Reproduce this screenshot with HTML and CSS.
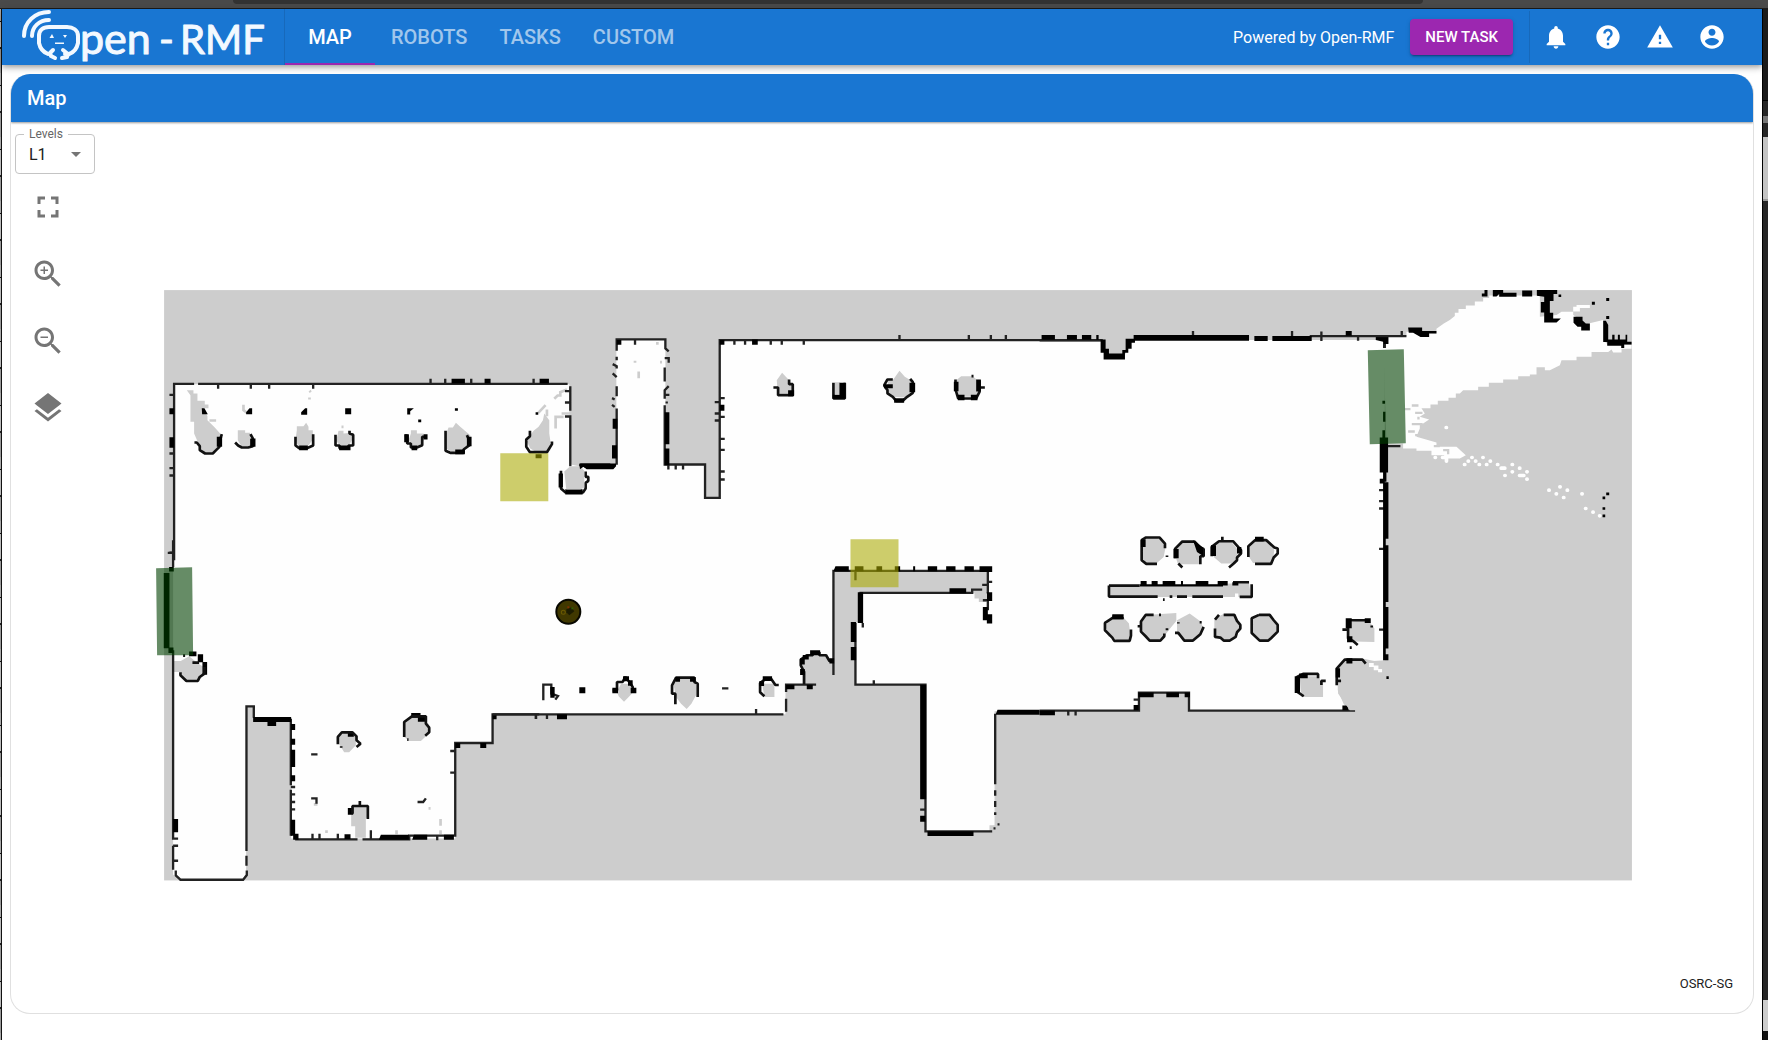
FILE: index.html
```html
<!DOCTYPE html>
<html lang="en">
<head>
<meta charset="utf-8">
<title>Open-RMF Dashboard</title>
<link rel="stylesheet" href="styles.css">
</head>
<body>
<div class="browser-edge"><div class="address-field"></div></div>
<div class="desktop">
<div class="backdrop-left"></div>
<div class="app">
  <header class="app-bar">
    <a class="brand" href="#" aria-label="Open-RMF">
      <svg class="logo" viewBox="0 0 284 56" role="img" aria-label="Open-RMF">
        <g fill="none" stroke="#f3f9ff" stroke-width="4" stroke-linecap="round" stroke-linejoin="round">
          <path d="M22 27C22 13 33 3 47 3M30 27C30 18 37 11 47 11"/>
          <path d="M46 45C41 43 38 39 37 34V27C37 21 41 18 47 18H65C71 18 76 21 76 27V34C75 39 73 43 67 45H63"/>
          <path d="M51 41L48 44L49 47L53 49M61 41L66 45L65 48L60 49"/>
        </g>
        <path d="M47.500 29L50 25L52 29ZM61 26H65L63 29ZM53 33.500H62V35H53Z" fill="#f3f9ff"/>
        <g class="wordmark"><text class="lower" x="78" y="45">pen</text><text x="157" y="45">-</text><text x="178" y="45">RMF</text></g>
      </svg>
    </a>
    <nav class="tabs">
      <a class="tab active" href="#map">MAP</a><a class="tab" href="#robots">ROBOTS</a><a class="tab" href="#tasks">TASKS</a><a class="tab" href="#custom">CUSTOM</a>
    </nav>
    <div class="actions">
      <span class="powered">Powered by Open-RMF</span>
      <button class="new-task" type="button">NEW TASK</button>
      <span class="divider"></span>
      <button class="icon-button" type="button" aria-label="Notifications"><svg viewBox="0 0 24 24"><path d="M12 22c1.100 0 2-.900 2-2h-4c0 1.100.890 2 2 2zm6-6v-5c0-3.070-1.640-5.640-4.500-6.320V4c0-.830-.670-1.500-1.500-1.500s-1.500.670-1.500 1.500v.680C7.630 5.360 6 7.920 6 11v5l-2 2v1h16v-1l-2-2z"/></svg></button>
      <button class="icon-button" type="button" aria-label="Help"><svg viewBox="0 0 24 24"><path d="M12 2C6.480 2 2 6.480 2 12s4.480 10 10 10 10-4.480 10-10S17.520 2 12 2zm1 17h-2v-2h2v2zm2.070-7.750l-.900.920C13.450 12.900 13 13.500 13 15h-2v-.500c0-1.100.450-2.100 1.170-2.830l1.240-1.260c.370-.360.590-.860.590-1.410 0-1.100-.900-2-2-2s-2 .900-2 2H8c0-2.210 1.790-4 4-4s4 1.790 4 4c0 .880-.360 1.680-.930 2.250z"/></svg></button>
      <button class="icon-button" type="button" aria-label="Warnings"><svg viewBox="0 0 24 24"><path d="M1 21h22L12 2 1 21zm12-3h-2v-2h2v2zm0-4h-2v-4h2v4z"/></svg></button>
      <button class="icon-button" type="button" aria-label="Account"><svg viewBox="0 0 24 24"><path d="M12 2C6.480 2 2 6.480 2 12s4.480 10 10 10 10-4.480 10-10S17.520 2 12 2zm0 3c1.660 0 3 1.340 3 3s-1.340 3-3 3-3-1.340-3-3 1.340-3 3-3zm0 14.200c-2.500 0-4.710-1.280-6-3.220.030-1.990 4-3.080 6-3.080 1.990 0 5.970 1.090 6 3.080-1.290 1.940-3.500 3.220-6 3.220z"/></svg></button>
    </div>
  </header>
  <main class="panel">
    <h1 class="panel-title">Map</h1>
    <div class="map-area">
      <svg class="floorplan" viewBox="12 122 1741 890" role="img" aria-label="Floor plan of level L1">
        <rect x="165" y="290" width="1467" height="590" fill="#cdcdcd"/>
        <path fill="#fefefe" d="M174 384H570V464L580 466H617V340H666V464H706V498H720V340H1102L1106 357H1124L1133 340H1385V660L1370 661L1356 658H1346L1338 668V690L1344 704L1352 711H1189V692H1139V711H995V831H926V684H856V622H860V593H988V571H834V674L826 657L815 652L803 660V684H786V714H493V743H456V838H292V719H254V706H247V876L242 880H180L174 874Z"/>
        <!-- north-east scan -->
        <g transform="translate(1340 280) scale(.3333)">
          <path fill="#fefefe" d="M130 170H200V155L290 160V146L312 130L330 120L345 108V98H356V87H378V76H405V64H430V54H448V46H600V110L650 105L665 95H700V80H710V75H750V84H720V94H700V105L740 132L790 120V180L805 195H875V206H845V217H820L815 208L805 216H755V230H710V240H665L660 255L630 270H615V261H590V283H570V288H535V298H490V308H447V320H415V330H370L360 340H348V353H326V362H294V373H272V384H245L255 400L240 410L268 418L250 430H240V445L230 470L290 487V500H350L378 525L360 535H320L312 525H275V512H230V505H190V490H140Z"/>
          <path fill="none" stroke="#cdcdcd" stroke-width="7" d="M195 387H212M216 376H236M226 398H248M236 410V418M216 432H248M205 454H225M226 465H246M282 498H300M310 510H325V522"/>
          <path fill="none" stroke="#fefefe" stroke-width="11" stroke-linecap="round" d="M319 442H320M286 532H287M308 532H320V543M374 553H375M385 543H386M396 532H397M407 543H408M418 553H419M440 553H441M451 543H452M429 532H430M473 553H474M484 564H495M495 586H496M517 575H518M517 553H518M539 564H540M561 575H562M561 597H562M539 586H552M627 630H628M649 641H650M671 652H672M682 630H683M660 620H661M726 641H727M737 685H738M759 696H760M779 707H780"/>
          <path d="M205 142H247V153H290V160H268V171H242L220 158H207ZM108 170H146V192H138V204H130V185L108 180ZM426 49V40H434V30H443V49ZM459 30H490V38H530V50H478V42L470 49H459ZM547 31H577V49H547ZM591 30H652V42H641V63H630V98H640V115H663L650 127H613V97H603V66H613V50L591 47ZM701 110H728V121L738 130H750V151H724V140H713L701 128ZM790 122H798L805 135V178H817V164H824V178H834V164H840V178H857V164H862V185H875V193H853V204H844V197H802V186H790ZM656 43h8v8h-8ZM756 65h9v9h-9ZM799 54h9v9h-9ZM799 108h9v9h-9ZM799 637h9v8h-9ZM788 649h8v8h-8ZM788 681h8v8h-8ZM788 703h8v8h-8Z"/>
        </g>
        <!-- meeting room row, north-west -->
        <g transform="translate(151 280) scale(.3333)">
          <path class="grey" d="M110 330H130V340H142V362H164V373H175V384H160L172 408V420L194 442L210 460V490L190 518H160L145 490L132 460V425H121V345ZM263 450H285V458H300V498H274L263 480ZM440 450V438H460L468 428L475 440V450H488V478L472 500H445L436 480ZM565 452H580V460L605 458V480L595 498H570L558 482ZM782 460V450H800V460H820V480L810 498H785L775 480ZM888 460L895 442H908L917 428L930 440L960 465V485L945 508L905 516L888 505ZM1140 465L1150 452L1165 440L1178 420L1182 400L1197 420V460L1200 480V510L1165 520L1140 505L1130 485Z"/>
          <path class="faint" d="M178 421H198M280 374V390L290 398M478 332L482 336M478 352V358M574 440H580M1164 398L1186 375M1212 356L1222 346H1230V336L1250 328M1234 400H1262M1216 445V410H1240M1190 388V408"/>
          <path class="wall" d="M132 311H72V840M144 311H1252M1260 318V392M1244 409H1260V558M58 344H72M58 520H72M58 564H72M58 586H72M58 817H72M204 311V326M302 311V326M357 311V326M489 311V326M841 311V296M885 311V296M963 311V296M1150 311V296M1244 333H1260M1244 367H1260M1290 568V552"/>
          <path d="M58 384h14v18h-14zM58 471h14v32h-14zM904 296h40v14h-40zM1003 296h18v14h-18zM1168 296h28v14h-28zM585 384h18v18h-18zM155 384h8l10 18h-17zM288 396l10-12h8v18h-18zM453 396l12-12h6v20h-18zM771 384h20l-11 9v10h-9zM804 418h9v8h-9zM914 384h9v8h-9zM1156 396h8v8h-8zM1290 550h90v16h-70l-12-6-8 8z"/>
          <path class="ring" d="M133 487H140L149 498V510L165 520H188L198 510L208 500V487L215 462M255 487L264 496L275 502H294L308 498V475L301 462M436 470V496L447 504H470L489 496V462M598 452V460L609 464V496H595V504H568V496H556V464M764 466H771V490H782V502H800L816 495V470H830M886 452V512L900 518H940V508L958 495V482L950 465M1139 452V468L1128 478V500L1139 516H1190L1205 492V484M1232 572V590V625L1246 637H1298L1306 625V608L1314 602V590H1306V574"/>
          <path d="M200 470h16v30h-16zM300 475h16v25h-16zM447 496h26v14h-26zM567 496h34v14h-34zM784 496h17v14h-17zM762 462h14v24h-14zM820 462h12v16h-12zM915 508h29v14h-29zM950 470h14v28h-14zM1156 522h18v12h-18zM1225 580h13v42h-13zM1245 627h52v16h-52z"/>
          <path class="grey" d="M1242 574L1260 558H1290L1302 572V622L1290 628H1248Z"/>
        </g>
        <!-- north corridor and main hall wall -->
        <g transform="translate(560 280) scale(.3333)">
          <path class="faint" d="M227 242V248M238 274V294M290 190H298M302 246H308"/>
          <path class="wall" d="M172 212V178H318V205L328 214M172 230V240M160 252L172 258V265M160 280L172 291M172 318V348M158 354L166 358M158 374L166 380M172 385V554M316 234H328V248M316 262V304M328 318L316 330V356M318 344H330M322 364V370M316 375V553H437V653H481V180H1626M227 180V194M525 180V194M557 180V194M634 180V194M667 180V194M733 180V194M1020 180V165M1228 180V165M1294 180V165M1339 180V165M481 354H496M466 366H481M466 400H481M481 410H496M466 421H481M481 476H496M481 509H496M481 574H496M481 598H496M327 553V568M349 553V568M371 553V568"/>
          <path d="M172 180h14v14h-14zM160 416h14v30h-14zM158 495h15v40h-15zM316 396h14v96h-14zM316 505h14v50h-14zM60 550h110v8l-8 9h-80l-10-8-10 8zM481 180h14v14h-14zM578 178h17v16h-17zM481 374h14v18h-14z"/>
          <path class="grey" d="M652 300L668 278L685 296L700 318V340H655ZM826 306H842V342H826ZM985 300H1000L1020 272L1036 290L1056 302V335L1035 352L1000 350L985 340ZM1190 300L1205 288H1240L1258 304V340L1245 350H1195Z"/>
          <path class="ring" d="M642 322H656V345H700V312H689V298M822 308V355H856V308M1000 298H984L974 316L984 330V340L1000 350L1010 362H1030L1043 350L1060 338V306L1052 296M1188 298V328L1196 355H1250L1260 335V300M1262 322H1276M1236 288H1242"/>
          <path d="M840 308h18v48h-38v-12h20zM1004 354h30v14h-30zM1050 308h17v28h-17zM974 312h26v12h-26zM1183 305h14v28h-14zM1250 298h14v36h-14zM1195 344h20v16h-20zM1234 344h20v16h-20zM686 330h18v18h-18z"/>
        </g>
        <!-- east hall -->
        <g transform="translate(1040 280) scale(.3333)">
          <path class="grey" d="M188 172H282L262 205L250 228H200L188 208Z"/>
          <path class="wall" d="M0 181H190M810 168H1100M460 168V153M757 168V153M845 154V183M955 170V182M1086 168V153M1018 630H1034M1018 663H1034M1018 685H1034M1018 806H1034M1018 1048H1034M1042 498H1082M0 1291H298V1237H448V1291H946M86 1291V1306M108 1291V1306M282 1258H296M1034 192V204"/>
          <path d="M6 165h40v14h-40zM82 165h30v14h-30zM127 165h28v14h-28zM170 165h7v14h-7zM282 165h346v17h-346zM644 168h40v15h-40zM698 168h118v15h-118zM918 153h18v14h-18zM183 178h15v28h10v14h40v-10h10v-34h28v12h-10v18h-10v12h-10v20h-64v-20h-9zM1020 472h25v105h-25zM1030 395h7v30h-7zM1028 362h8v9h-8zM1020 596h15v14h-15zM1030 577h10v28h-10zM1030 606h16v170h-16zM1030 776h8v20h-8zM1030 795h16v170h-16zM1030 964h8v18h-8zM1030 980h16v125h-16zM1030 1104h8v20h-8zM1030 1122h16v18h-16zM1028 450h8v30h-8zM1038 1188h9v8h-9zM0 1291h46v14h-46zM296 1237h46v14h-46zM380 1237h38v14h-38zM435 1237h16v14h-16zM282 1274h15v16h-15zM908 1276h18v14h-18z"/>
          <path class="grey" d="M320 772H350L368 780L378 800L372 830L350 850H320L308 838V785ZM410 800L430 784H460L484 810L480 852H415L408 830ZM520 800L540 784H575L595 810L588 850H545L522 830ZM630 800L655 778H685L704 810L698 848H640L628 830ZM208 918H300L628 908L634 950H208ZM196 1030L220 1004H245L268 1030L274 1078L240 1082L205 1068ZM302 1024L320 1004L410 998V1022L392 1044L372 1070L350 1082L330 1080L305 1058ZM412 1020L450 1000L485 1025L490 1045L480 1070L458 1082H435L412 1062ZM524 1015L550 1002H580L600 1030V1050L588 1070L565 1082L524 1070ZM640 1014L660 1004H690L712 1030V1055L690 1080H660L638 1060ZM925 1025L985 1018L1004 1045V1085L940 1084L925 1070ZM895 1160L930 1136H975L1040 1150V1290H930L895 1240ZM780 1188H835L850 1210V1250H785Z"/>
          <path class="ring" d="M352 851H320L306 840V780L318 772H360L376 790V804M382 826V830M428 862L416 850M406 834V806L428 784H464L482 802L492 806V828H482V852M516 828V800L538 783H580L592 796L604 810V820L592 832V840L582 850L568 862M548 770V783M626 830V798L646 780H680L704 802L714 805V820L702 832L694 851H646M208 916H300M580 906H628M636 912V950H600M208 916V949H354M390 949H398M412 949H442M458 949H550M370 958H375M218 1010H240M252 1014H218L196 1028V1050L218 1072L224 1082H270L274 1066V1048M342 1004H318L304 1024V1054L318 1068L330 1081H362L374 1068V1060M294 1038H304M358 1004H364M382 1044V1050M416 1026V1030M406 1058H416L434 1081H460L482 1062L492 1040M480 1026H486M526 1018L538 1004M552 1004H584L592 1022L602 1034V1045L592 1056L588 1070L570 1081H552L542 1072L526 1070V1045M658 1004H690L702 1020L714 1034V1054L694 1074L686 1081H660L636 1058V1014L658 1004M908 1048H925V1075L940 1082L954 1094M925 1048V1020H990M996 1036V1042M930 1102H936M891 1215V1165L915 1138H968L978 1150M891 1202H904M792 1248L772 1234V1190L790 1181H835V1194M858 1202H845V1214"/>
          <path d="M303 902h18v14h-18zM336 902h18v14h-18zM369 902h38v14h-38zM424 902h6v14h-6zM468 902h38v14h-38zM534 902h30v14h-30zM578 906h18v10h-18zM300 912h250v7h-250zM304 778h14v22h-14zM460 780l30 22v25l-18-12zM402 806h15v28h-15zM514 795h15v32h-15zM646 770h26v14h-26zM218 1002h34v14h-34zM592 800h13v20h-13zM918 1014h18v30h-18zM975 1014h18v14h-18zM922 1068h16v18h-16zM765 1188h16v50h-16zM778 1180h26v14h-26zM888 1164h13v28h-13zM920 1134h18v16h-18z"/>
          <path fill="#fefefe" d="M988 1148h14v12h-14zM1002 1156h14v14h-14zM1015 1166h12v10h-12zM586 940h10v14h-10z"/>
        </g>
        <!-- south-west rooms -->
        <g transform="translate(140 540) scale(.3333)">
          <path class="grey" d="M102 362H125L150 348L178 370L194 380V400L180 420H138L124 395H102ZM595 590L620 576L650 590V615L630 636H615L600 612ZM795 545L825 528L868 550V580L845 602H810L795 590ZM640 800H686V832H680V892H648V858H636V820Z"/>
          <path class="faint" d="M524 792H535M562 870V878M868 804H874M904 836V856M904 870V882M772 870V882"/>
          <path class="wall" d="M102 0V80M102 330V898M102 916V988M86 38H102M102 895H117M102 916H117M102 961H117M322 932V498H344V532M322 946V976M110 990V1005L124 1018H312L323 1004V990M455 535V735M455 748V886M455 762H468M455 785H468M455 807H468M455 740H468M468 897H655M670 897H810V886H948V608H1060V522H1200M520 897V880M541 897V880M596 897V880M695 897V870M933 632H948M933 697H948M1190 522V536M516 642H535M516 774H532V790M835 785H852L860 774M894 885V900"/>
          <path d="M90 80h14v14h-14zM74 98h17v226h-17zM88 322h15v16h-15zM102 836h15v40h-15zM342 530h114v15h-45v12h-26v-12h-43zM455 551h13v18h-13zM455 595h13v18h-13zM455 628h13v52h-13zM455 705h13v18h-13zM455 838h13v48h-13zM462 880h16v18h-16zM616 882h18v14h-18zM725 883h84v15h-90zM824 883h40v15h-45zM914 883h30v15h-30zM948 608h15v15h-15zM1023 608h18v15h-18zM1060 522h12v15h-12zM626 803h16v20h-16zM190 365h14v38h-14zM176 342h16v24h-16zM150 334h22v14h-22zM816 518h28v14h-28zM836 530h26v14h-26zM626 575h18v14h-18z"/>
          <path class="ring" d="M132 346H138M160 367H180M196 380V400L182 410L176 422H142L124 405V396M596 612V590L608 576H640L652 588V600L664 610L652 620M606 618V622M795 590V545L818 528H860V550L870 562V576L858 586M804 598H808M640 820V797H686V836M662 782V797"/>
        </g>
        <!-- centre and south corridor -->
        <g transform="translate(520 530) scale(.3333)">
          <path class="grey" d="M293 485L305 460H325L345 482L328 500L314 514L298 498ZM462 460L478 445H530V495L516 520L502 536L485 520L470 500ZM728 460H765V500H735ZM848 390L880 375H915L942 390V463H870L848 430ZM1365 178H1400V215H1378V205H1365ZM1410 885H1440V910H1410Z"/>
          <path class="wall" d="M-80 552H792M800 544V505M800 485V463H890M50 552V566M83 552V566M710 552V536M942 434V122H1405V190M1008 122V150M1405 155H1418M1388 164H1402M1020 188H1358V178H1388M1030 278V292M1008 278V463H1218V903H1418M1063 463V450M1202 838H1216M1427 550V762M1427 780V796M1427 812V830M1427 846V854M1434 882H1440M1422 894H1428M72 510V463H96V490L116 497L108 508M608 474H627M1390 210H1405V240"/>
          <path d="M113 552h30v15h-30zM180 471h18v18h-18zM948 108h40v15h-46zM1006 108h26v15h-26zM1071 108h17v15h-17zM1126 108h16v15h-16zM1181 108h6v15h-6zM1225 108h28v15h-28zM1280 108h28v15h-28zM1335 108h28v15h-28zM1380 108h38v17h-38zM1015 186h16v92h-16zM994 275h16v60h-16zM994 350h16v40h-16zM1202 463h18v344h-18zM1202 856h16v18h-16zM1224 903h138v14h-138zM1290 174h50v15h-50zM1402 186h16v26h-16zM1390 230h15v40h-15zM1402 252h16v28h-16zM1434 538h126v15h-132zM800 463h25v14h-25zM862 463h18v14h-18zM93 470h13v32h-13z"/>
          <path class="ring" d="M280 480H293V455H310L318 440L330 455L340 470V482H350M468 522V490H458V465L470 442H525V455L535 460V500M735 498L722 486V458L740 445H755L768 464H778M854 462V425L844 405V388L862 375H880V366H900V375H920L930 392H942"/>
          <path d="M279 472h17v17h-17zM334 472h17v17h-17zM311 438h18v15h-18zM326 450h14v16h-14zM468 440h14v14h-14zM512 440h17v14h-17zM730 438h28v14h-28zM720 452h14v15h-14zM872 360h30v15h-30zM842 385h14v18h-14zM850 374h18v14h-18zM842 416h14v18h-14zM930 384h14v16h-14z"/>
        </g>
        <g class="places">
          <path d="M501 453h48v48h-48zM851 539h48v48h-48z" fill="#a8a800" fill-opacity=".58"/>
          <path d="M1368 350L1404 349L1406 443L1370 444ZM157 568L193 567L194 655L158 655Z" fill="#003f00" fill-opacity=".6"/>
        </g>
        <g class="robot">
          <circle cx="569" cy="611.500" r="12" fill="#403800" stroke="#080800" stroke-width="2"/>
          <path d="M567 609l5-2 3 4-5 4-3-3z" fill="#1c1c00"/>
          <circle cx="564" cy="612" r="2" fill="none" stroke="#6b5a00"/>
          <path d="M569 606v2" stroke="#813000" stroke-width="2"/>
          <path d="M573 607v2" stroke="#305c00" stroke-width="2"/>
        </g>
      </svg>
      <div class="map-tools">
        <div class="field">
          <label class="field-label" for="level">Levels</label>
          <select class="level" id="level"><option>L1</option></select>
          <svg class="caret" viewBox="0 0 24 24" aria-hidden="true"><path d="M7 10l5 5 5-5z"/></svg>
        </div>
        <button class="tool" type="button" aria-label="Fit to screen"><svg viewBox="0 0 24 24"><path d="M7 14H5v5h5v-2H7v-3zm-2-4h2V7h3V5H5v5zm12 7h-3v2h5v-5h-2v3zM14 5v2h3v3h2V5h-5z"/></svg></button>
        <button class="tool" type="button" aria-label="Zoom in"><svg viewBox="0 0 24 24"><path d="M15.500 14h-.790l-.280-.270C15.410 12.590 16 11.110 16 9.500 16 5.910 13.090 3 9.500 3S3 5.910 3 9.500 5.910 16 9.500 16c1.610 0 3.090-.590 4.230-1.570l.270.280v.790l5 4.990L20.490 19l-4.990-5zm-6 0C7.010 14 5 11.990 5 9.500S7.010 5 9.500 5 14 7.010 14 9.500 11.990 14 9.500 14zm2.500-4h-2v2H9v-2H7V9h2V7h1v2h2v1z"/></svg></button>
        <button class="tool" type="button" aria-label="Zoom out"><svg viewBox="0 0 24 24"><path d="M15.500 14h-.790l-.280-.270C15.410 12.590 16 11.110 16 9.500 16 5.910 13.090 3 9.500 3S3 5.910 3 9.500 5.910 16 9.500 16c1.610 0 3.090-.590 4.230-1.570l.270.280v.790l5 4.990L20.490 19l-4.990-5zm-6 0C7.010 14 5 11.990 5 9.500S7.010 5 9.500 5 14 7.010 14 9.500 11.990 14 9.500 14zM7 9h5v1H7z"/></svg></button>
        <button class="tool" type="button" aria-label="Layers"><svg viewBox="0 0 24 24"><path d="M11.990 18.540l-7.370-5.730L3 14.070l9 7 9-7-1.630-1.270-7.380 5.740zM12 16l7.360-5.730L21 9l-9-7-9 7 1.630 1.270L12 16z"/></svg></button>
      </div>
      <span class="site">OSRC-SG</span>
    </div>
  </main>
</div>
<div class="backdrop-right"></div>
</div>
</body>
</html>
```
FILE: styles.css
```css
* { box-sizing: border-box; }
body {
  margin: 0;
  min-height: 100vh;
  display: flex;
  flex-direction: column;
  background: #fff;
  color: #212121;
  font-family: Roboto, "Liberation Sans", sans-serif;
}
button { border: 0; margin: 0; padding: 0; background: none; font: inherit; color: inherit; cursor: pointer; }
a { color: inherit; text-decoration: none; }

.browser-edge { height: 9px; background: #4a4a4a; border-bottom: 1px solid #1c1c1c; }
.address-field { height: 4px; margin: 0 345px 0 233px; background: #333; border-radius: 0 0 4px 4px; }
.desktop { flex: 1; display: grid; grid-template-columns: 2px minmax(0, 1fr) 6px; }
.backdrop-left { background: repeating-linear-gradient(#aaa 0 12px, #111 12px 13px, #bbb 13px 38px, #222 38px 40px, #999 40px 64px); border-right: 1px solid #111; }
.backdrop-right { background: linear-gradient(#1a1a1a 0 91px, #000 91px 92px, #262626 92px 107px, #777 107px 114px, #262626 114px 128px, #c4c4c4 128px 190px, #999 190px 192px, #262626 192px 991px, #ccc 991px 1022px, #111 1022px); border-left: 1px solid #000; }
.app { display: flex; flex-direction: column; min-width: 0; }

.app-bar {
  display: flex;
  height: 56px;
  flex: none;
  background: #1976d2;
  color: #fff;
  box-shadow: 0 2px 4px -1px rgba(0,0,0,.2), 0 4px 5px rgba(0,0,0,.14), 0 1px 10px rgba(0,0,0,.12);
}
.brand { display: block; width: 283px; border-right: 1px solid #1769bb; }
.logo { display: block; width: 284px; height: 56px; }
.wordmark { fill: #f3f9ff; stroke: #f3f9ff; stroke-width: 1px; stroke-linejoin: round; font: 40px Lato, sans-serif; }
.wordmark .lower { font-size: 43px; }
.tabs { display: flex; }
.tab {
  display: flex;
  align-items: center;
  justify-content: center;
  min-width: 90px;
  padding: 0 16px;
  font-size: 20px;
  font-weight: 500;
  color: rgba(255,255,255,.6);
}
.tab.active { color: #fff; box-shadow: inset 0 -2px #9c27b0; }
.actions { display: flex; align-items: center; margin-left: auto; padding-right: 24px; }
.powered { font-size: 16px; }
.new-task {
  height: 36px;
  margin: 0 16px;
  padding: 0 15px;
  border-radius: 4px;
  background: #9c27b0;
  font-size: 15px;
  font-weight: 500;
  box-shadow: 0 3px 1px -2px rgba(0,0,0,.2), 0 2px 2px rgba(0,0,0,.14), 0 1px 5px rgba(0,0,0,.12);
}
.divider { width: 1px; height: 52px; background: #1769bb; }
.icon-button { width: 52px; height: 52px; display: grid; place-items: center; }
.icon-button svg { width: 28px; height: 28px; fill: #fff; }

.panel {
  flex: 1;
  display: flex;
  flex-direction: column;
  margin: 9px 8px 28px;
  border: 1px solid #e0e0e0;
  border-top: 0;
  border-radius: 20px;
  overflow: hidden;
}
.panel-title {
  margin: 0;
  padding: 0 16px;
  font-size: 20px;
  font-weight: 500;
  line-height: 48px;
  background: #1976d2;
  color: #fff;
  box-shadow: 0 1px 2px rgba(0,0,0,.4);
}
.map-area { position: relative; flex: 1; display: flex; }
.floorplan { display: block; width: 100%; height: auto; }
.floorplan .grey { fill: #cdcdcd; }
.floorplan .wall { fill: none; stroke: #222; stroke-width: 7; }
.floorplan .ring { fill: none; stroke: #111; stroke-width: 8; stroke-linejoin: bevel; }
.floorplan .faint { fill: none; stroke: #cdcdcd; stroke-width: 8; }

.map-tools { position: absolute; top: 12px; left: 4px; display: flex; flex-direction: column; align-items: flex-start; gap: 15px; }
.field { position: relative; margin-bottom: -8px; }
.level {
  display: block;
  width: 80px;
  height: 40px;
  padding: 0 13px;
  appearance: none;
  border: 1px solid #c4c4c4;
  border-radius: 4px;
  background: #fff;
  color: #212121;
  font: 16px Roboto, sans-serif;
}
.field-label { position: absolute; top: -7px; left: 9px; padding: 0 5px; background: #fff; color: #666; font-size: 12px; line-height: 14px; }
.caret { position: absolute; right: 7px; top: 8px; width: 24px; height: 24px; fill: #757575; pointer-events: none; }
.tool { width: 52px; height: 52px; margin-left: 7px; display: grid; place-items: center; }
.tool svg { width: 36px; height: 36px; fill: #757575; }
.site { position: absolute; right: 20px; bottom: 21px; font-size: 13px; line-height: 16px; }
```
